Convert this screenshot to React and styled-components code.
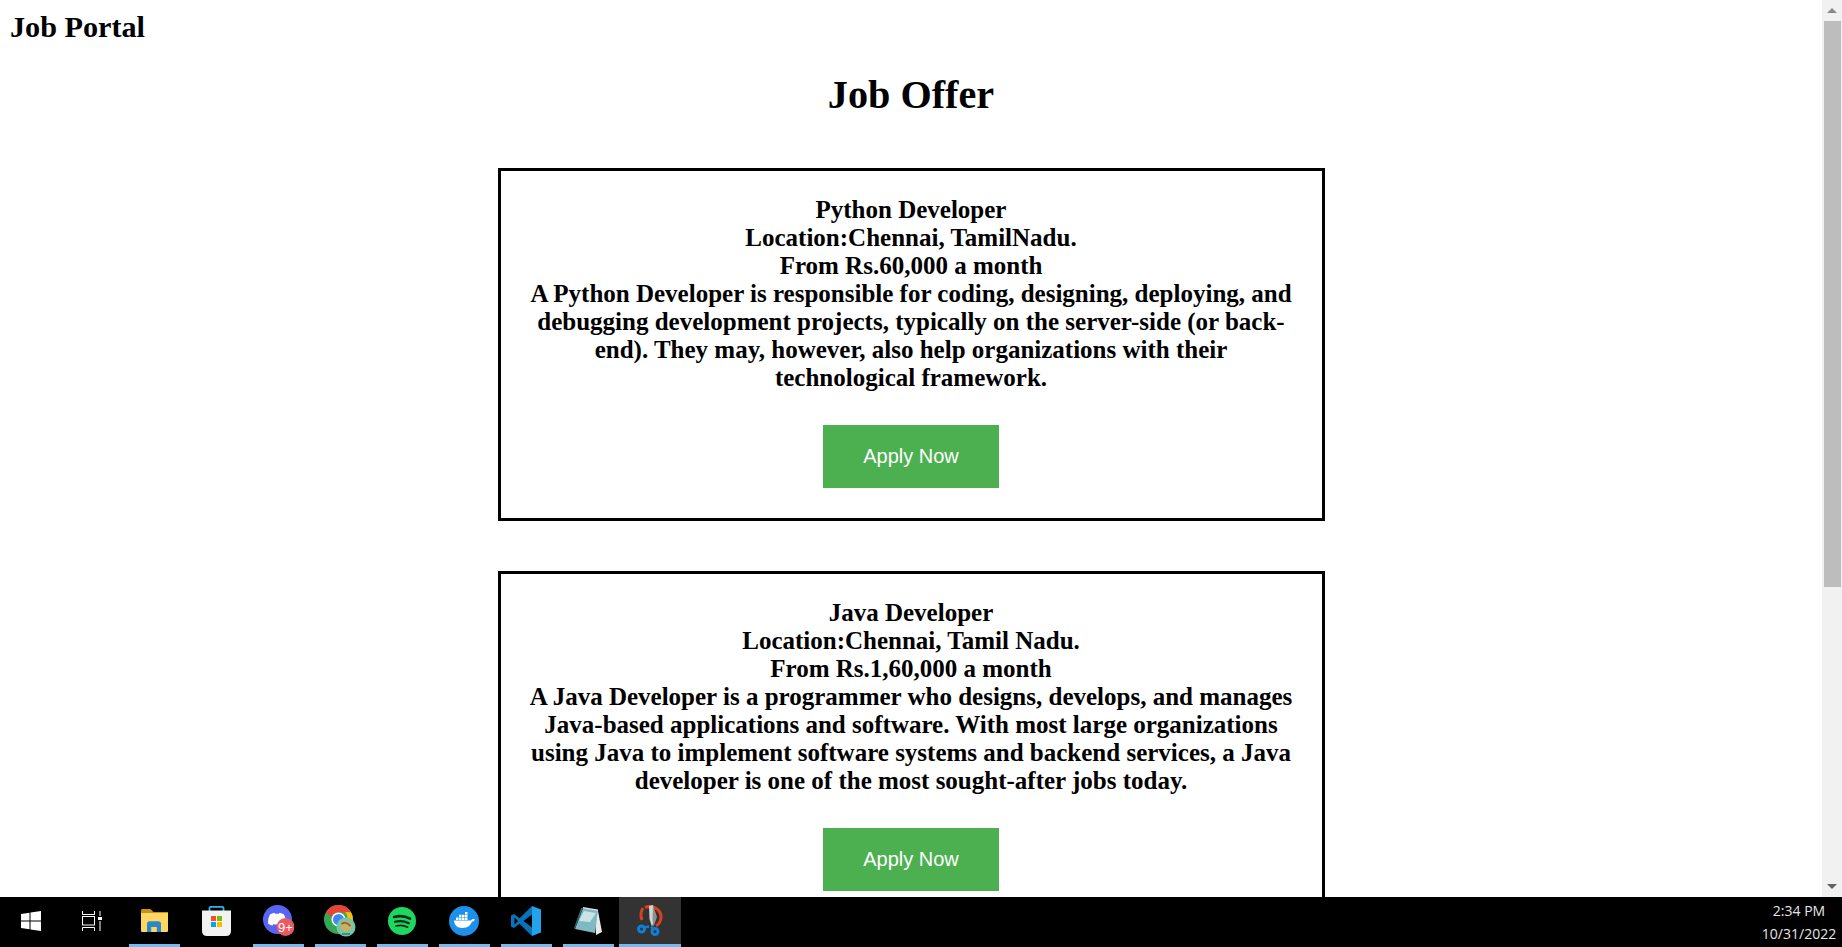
import React from "react";
import styled, { createGlobalStyle } from "styled-components";

const GlobalStyle = createGlobalStyle`
  html, body {
    margin: 0;
    padding: 0;
    height: 100%;
    overflow: hidden;
    background: #000;
  }
`;

const jobs = [
  {
    title: "Python Developer",
    location: "Location:Chennai, TamilNadu.",
    pay: "From Rs.60,000 a month",
    text: "A Python Developer is responsible for coding, designing, deploying, and debugging development projects, typically on the server-side (or back-end). They may, however, also help organizations with their technological framework.",
  },
  {
    title: "Java Developer",
    location: "Location:Chennai, Tamil Nadu.",
    pay: "From Rs.1,60,000 a month",
    text: "A Java Developer is a programmer who designs, develops, and manages Java-based applications and software. With most large organizations using Java to implement software systems and backend services, a Java developer is one of the most sought-after jobs today.",
  },
];

const StartIcon = () => (
  <svg width="20" height="20" viewBox="0 0 20 20">
    <path fill="#fff" d="M0 3 8.500 1.700v7.700H0zM9.500 1.500 20 0v9.400H9.500zM0 10.400h8.500v7.900L0 17zM9.500 10.400H20V20L9.500 18.500z" />
  </svg>
);

const TaskViewIcon = () => (
  <svg width="20" height="20" viewBox="0 0 20 20" fill="none" stroke="#fff" strokeWidth="1">
    <path d="M.5 0v3.500h12V0" />
    <rect x="0.500" y="5.500" width="12" height="8.500" />
    <path d="M.5 20v-3.500h12V20" />
    <path d="M18 0v5M18 10v10" />
    <rect x="16" y="6" width="4" height="3" fill="#fff" stroke="none" />
  </svg>
);

const ExplorerIcon = () => (
  <svg width="27" height="23" viewBox="0 0 27 23">
    <path fill="#c98f16" d="M0 1.500C0 .5.500 0 1.500 0h8l3 3H27v5H0z" />
    <path fill="#fdd663" d="M0 4h27v17.500c0 1-.5 1.500-1.500 1.500h-24C.5 23 0 22.500 0 21.500z" />
    <path fill="#2b87c8" d="M6 15c0-1.800 1-2.800 2.800-2.800h8.400c1.800 0 2.800 1 2.800 2.800v8h-4.200v-5h-5.600v5H6z" />
  </svg>
);

const StoreIcon = () => (
  <svg width="29" height="30" viewBox="0 0 29 30">
    <path fill="none" stroke="#29b6f0" strokeWidth="1.800" d="M7.500 6V2c0-.8.400-1.100 1.100-1.100h11.800c.7 0 1.100.3 1.100 1.100v4" />
    <path fill="#f2f2f2" d="M0 4.500h29v20.500c0 3-1.800 5-5 5H5c-3.200 0-5-2-5-5z" />
    <rect x="9" y="10" width="5" height="5" fill="#f25022" />
    <rect x="15" y="10" width="5" height="5" fill="#7fba00" />
    <rect x="9" y="16" width="5" height="5" fill="#00a4ef" />
    <rect x="15" y="16" width="5" height="5" fill="#ffb900" />
  </svg>
);

const DiscordIcon = () => (
  <svg width="31" height="31" viewBox="0 0 31 31">
    <circle cx="14.500" cy="14.500" r="14.500" fill="#5865f2" />
    <path fill="#fff" d="M7 9.500c2-1.200 3.500-1.600 4.500-1.700l.5 1c1.400-.2 2.600-.2 4 0l.5-1c1 .1 2.500.5 4.500 1.700 1.500 3 2.200 6 2 9-1.500 1.200-3 1.800-4.500 2l-1-1.500-1.500.4h-4l-1.500-.4-1 1.500c-1.500-.2-3-.8-4.500-2-.2-3 .5-6 2-9z" />
    <circle cx="22.500" cy="22" r="9" fill="#eb5a63" />
    <BadgeText x="22.500" y="26.500">9+</BadgeText>
  </svg>
);

const ChromeIcon = () => (
  <svg width="32" height="32" viewBox="0 0 32 32">
    <circle cx="14.500" cy="14.500" r="14.500" fill="#34a853" />
    <path fill="#ea4335" d="M14.500 0a14.500 14.500 0 0 1 12.600 7.300H14.500a7.300 7.300 0 0 0-7 5L2 7.300A14.500 14.500 0 0 1 14.500 0z" />
    <path fill="#fbbc05" d="M27 7.300A14.500 14.500 0 0 1 14.500 29l6.500-11a7.300 7.300 0 0 0 0-10.700z" />
    <circle cx="14.500" cy="14.500" r="7" fill="#fff" />
    <circle cx="14.500" cy="14.500" r="5.500" fill="#4285f4" />
    <circle cx="22" cy="22" r="9.500" fill="#76c7a9" />
    <circle cx="22" cy="21" r="5.500" fill="#c8b265" />
    <path fill="none" stroke="#a0633a" strokeWidth="2" d="M17.500 19c3-2 6.500-1 9 2" />
    <path fill="none" stroke="#3f8f80" strokeWidth="2" d="M18 29h8" />
  </svg>
);

const SpotifyIcon = () => (
  <svg width="28" height="28" viewBox="0 0 28 28">
    <circle cx="14" cy="14" r="14" fill="#1ed760" />
    <g fill="none" stroke="#0c2c17" strokeLinecap="round">
      <path strokeWidth="2.600" d="M6 10c5.500-1.500 11-1 16 1.600" />
      <path strokeWidth="2.200" d="M7 14.800c4.800-1.200 9.500-.8 13.800 1.400" />
      <path strokeWidth="1.800" d="M8 19c4-1 8-.7 11.500 1.100" />
    </g>
  </svg>
);

const DockerIcon = () => (
  <svg width="30" height="30" viewBox="0 0 30 30">
    <circle cx="15" cy="15" r="15" fill="#1d91ea" />
    <path fill="#fff" d="M5 14.500h17c.5-1.500 2-2 3.800-1.300-.3 1.500-1.300 2.300-2.800 2.400-1.300 3.800-4.500 6.400-9.500 6.400-5.300 0-8-2.700-8.500-7.500z" />
    <path fill="#fff" d="M7 11.500h2.500v2.500H7zM10 11.500h2.500v2.500H10zM13 11.500h2.500v2.500H13zM16 11.500h2.500v2.500H16zM10 8.800h2.500v2.300H10zM13 8.800h2.500v2.300H13zM16 8.800h2.500v2.300H16zM16 6h2.500v2.300H16z" />
  </svg>
);

const VSCodeIcon = () => (
  <svg width="30" height="30" viewBox="0 0 30 30">
    <path fill="#0a72b8" d="M21 0 8.500 12.300 3 8 0 9.500v11L3 22l5.500-4.300L21 30z" />
    <path fill="#000" d="M21 8.500 12.500 15l8.500 6.500zM3.500 11.500v7L7 15z" />
    <path fill="#23a3ea" d="M21 0l9 3.500v23L21 30z" />
  </svg>
);

const NotepadIcon = () => (
  <svg width="28" height="28" viewBox="0 0 28 28">
    <path fill="#eaeaea" d="M21 4h3l4 21-6 3z" />
    <path fill="#7fb9c2" d="M9 1 24 3.500 21 26 1 22z" />
    <path fill="#c7e3e6" d="M10 4 22 6 16 15 5 14z" />
    <path fill="#2b6670" d="M1 22 9 1H7L0 21z" />
    <path fill="#dddddd" d="M9 0 24 2.500V4L9 1.500z" />
  </svg>
);

const SnipIcon = () => (
  <svg width="27" height="31" viewBox="0 0 27 31">
    <path fill="none" stroke="#d8401f" strokeWidth="3" d="M8 2.500c7-3 16 1.500 16 9.500 0 4-2 7-5 9M6 3c-2 3-2.500 8-1 12" />
    <path fill="#d4d4d4" d="M12 1l4-1 1.500 14-2.500 8-2.500-8z" />
    <path fill="#8f8f8f" d="M16 0 20 12l-3.500 10-1-8z" />
    <g fill="none" stroke="#0d7fd8" strokeWidth="3">
      <circle cx="4.500" cy="24" r="3" />
      <circle cx="18" cy="26.500" r="3" />
    </g>
    <path stroke="#0d7fd8" strokeWidth="2.400" d="M7 22.500l5-1M16 24l-2-2" />
  </svg>
);

const taskItems = [
  { id: "tasks", icon: <TaskViewIcon /> },
  { id: "explorer", icon: <ExplorerIcon />, open: true },
  { id: "store", icon: <StoreIcon /> },
  { id: "discord", icon: <DiscordIcon />, open: true },
  { id: "chrome", icon: <ChromeIcon />, open: true },
  { id: "spotify", icon: <SpotifyIcon />, open: true },
  { id: "docker", icon: <DockerIcon />, open: true },
  { id: "vscode", icon: <VSCodeIcon />, open: true },
  { id: "notepad", icon: <NotepadIcon />, open: true },
  { id: "snip", icon: <SnipIcon />, open: true, active: true },
];

function App() {
  return (
    <Screen>
      <GlobalStyle />
      <Window>
        <Page>
          <Brand>Job Portal</Brand>
          <Heading>Job Offer</Heading>
          {jobs.map((job) => (
            <Card key={job.title}>
              <Details>
                {job.title}
                <br />
                {job.location}
                <br />
                {job.pay}
                <br />
                {job.text}
              </Details>
              <ApplyButton>Apply Now</ApplyButton>
            </Card>
          ))}
        </Page>
        <Scrollbar>
          <ArrowButton>
            <svg width="10" height="5" viewBox="0 0 10 5">
              <path d="M5 0l5 5H0z" fill="#8a8a8a" />
            </svg>
          </ArrowButton>
          <Track>
            <Thumb />
          </Track>
          <ArrowButton>
            <svg width="10" height="5" viewBox="0 0 10 5">
              <path d="M0 0h10L5 5z" fill="#606060" />
            </svg>
          </ArrowButton>
        </Scrollbar>
      </Window>
      <Taskbar>
        <StartSlot>
          <StartIcon />
        </StartSlot>
        {taskItems.map((item) => (
          <TaskSlot key={item.id} $active={item.active}>
            <IconArea>{item.icon}</IconArea>
            <RunningBar $open={item.open} $active={item.active} />
          </TaskSlot>
        ))}
        <Clock>
          <span>2:34 PM</span>
          <span>10/31/2022</span>
        </Clock>
      </Taskbar>
    </Screen>
  );
}

const Screen = styled.div`
  width: 1842px;
  height: 947px;
  display: flex;
  flex-direction: column;
  overflow: hidden;
`;

const Window = styled.div`
  display: flex;
  height: 897px;
  background: #fff;
`;

const Page = styled.main`
  width: 1822px;
  height: 897px;
  overflow: hidden;
  font-family: "Liberation Serif", "Times New Roman", serif;
  color: #000;
`;

const Brand = styled.h1`
  margin: 0;
  padding: 11px 0 0 10px;
  font-size: 30.2px;
  line-height: 32px;
  font-weight: 700;
`;

const Heading = styled.h2`
  margin: 29px 0 50px;
  font-size: 40.2px;
  line-height: 46px;
  font-weight: 700;
  text-align: center;
`;

const Card = styled.section`
  box-sizing: border-box;
  width: 827px;
  height: 353px;
  margin: 0 auto 50px;
  padding: 25px 24px 0;
  border: 3px solid #000;
  display: flex;
  flex-direction: column;
  align-items: center;
`;

const Details = styled.p`
  margin: 0;
  font-size: 25px;
  line-height: 28px;
  font-weight: 700;
  text-align: center;
`;

const ApplyButton = styled.button`
  width: 176px;
  height: 63px;
  margin-top: 33px;
  padding: 0;
  border: none;
  background: #4caf50;
  color: #fff;
  font-family: "Liberation Sans", Arial, sans-serif;
  font-size: 20px;
`;

const Scrollbar = styled.div`
  width: 20px;
  height: 897px;
  background: #f1f1f1;
  display: flex;
  flex-direction: column;
`;

const ArrowButton = styled.div`
  height: 21px;
  flex: none;
  display: flex;
  align-items: center;
  justify-content: center;
`;

const Track = styled.div`
  flex: 1;
  padding: 0 1px 0 2px;
`;

const Thumb = styled.div`
  height: 566px;
  background: #bdbdbd;
`;

const Taskbar = styled.footer`
  height: 50px;
  display: flex;
  background: #000;
`;

const StartSlot = styled.div`
  width: 61px;
  padding-bottom: 3px;
  display: flex;
  align-items: center;
  justify-content: center;
`;

const TaskSlot = styled.div`
  width: 62px;
  display: flex;
  flex-direction: column;
  align-items: center;
  background: ${(p) => (p.$active ? "#333333" : "transparent")};
`;

const IconArea = styled.div`
  flex: 1;
  display: flex;
  align-items: center;
  justify-content: center;
`;

const RunningBar = styled.div`
  width: ${(p) => (p.$active ? "100%" : "51px")};
  height: 3px;
  background: ${(p) => (p.$open ? "#76b9ed" : "transparent")};
`;

const Clock = styled.div`
  margin-left: auto;
  width: 80px;
  padding: 2px 3px 0 0;
  display: flex;
  flex-direction: column;
  align-items: center;
  color: #e6e6e6;
  font-family: "Open Sans", "Noto Sans", sans-serif;
  font-size: 14px;
  line-height: 23px;
`;

const BadgeText = styled.text`
  fill: #fff;
  font-family: "Liberation Sans", Arial, sans-serif;
  font-size: 13px;
  text-anchor: middle;
`;

export default App;
